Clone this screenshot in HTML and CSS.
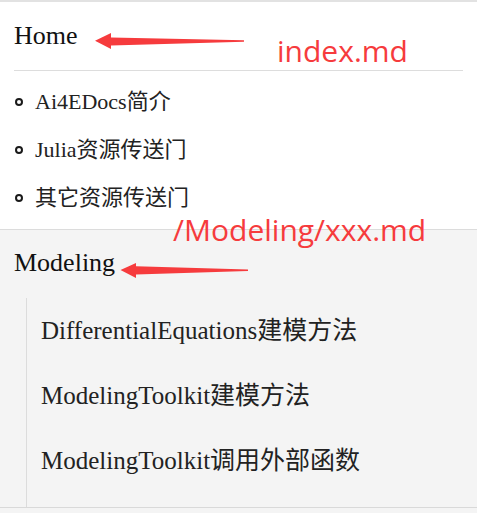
FILE: index.html
```html
<!DOCTYPE html>
<html lang="zh">
<head>
<meta charset="utf-8">
<title>Docs navigation</title>
<link rel="stylesheet" href="styles.css">
</head>
<body>
<div class="page">
  <section class="group group-home">
    <h2 class="group-title">Home</h2>
    <ul class="bullet-list">
      <li class="bullet-item">Ai4EDocs简介</li>
      <li class="bullet-item">Julia资源传送门</li>
      <li class="bullet-item">其它资源传送门</li>
    </ul>
  </section>
  <section class="group group-modeling">
    <h2 class="group-title">Modeling</h2>
    <ul class="tree-list">
      <li class="tree-item">DifferentialEquations建模方法</li>
      <li class="tree-item">ModelingToolkit建模方法</li>
      <li class="tree-item">ModelingToolkit调用外部函数</li>
    </ul>
  </section>

  <svg class="arrows" width="477" height="513" viewBox="0 0 477 513" aria-hidden="true">
    <polygon class="arrow" points="95,40.8 111,33 111,37.6 244,40.3 244,41.7 111,45.6 111,49"/>
    <polygon class="arrow" points="120.5,270 136,263 136,266.2 248,269.5 248,270.9 136,274.4 136,278"/>
  </svg>
  <div class="note note-index">index.md</div>
  <div class="note note-modeling">/Modeling/xxx.md</div>
</div>
</body>
</html>
```

FILE: styles.css
```css
html, body {
  margin: 0;
  padding: 0;
}

body {
  background: #f4f4f4;
  font-family: "Liberation Serif", "Noto Sans CJK SC", serif;
  color: #222;
}

.page {
  position: relative;
  width: 477px;
  height: 513px;
  overflow: hidden;
}

.group {
  padding: 0 14px;
}

.group-home {
  background: #fff;
  border-top: 2px solid #e2e2e2;
  padding-top: 0;
  padding-bottom: 7px;
}

.group-modeling {
  background: #f4f4f4;
  border-top: 1px solid #dcdcdc;
  border-bottom: 1px solid #d9d9d9;
}

.group-title {
  margin: 0;
  font-size: 26px;
  font-weight: normal;
  line-height: 40px;
  color: #111;
}

.group-home .group-title {
  padding: 14px 0 14px;
  border-bottom: 1px solid #dddddd;
}

.group-modeling .group-title {
  padding: 13px 0 0;
}

.bullet-list {
  list-style: none;
  margin: 7px 0 0;
  padding: 0;
}

.bullet-item {
  font-size: 22px;
  line-height: 48px;
  white-space: nowrap;
}

.bullet-item::before {
  content: "";
  display: inline-block;
  box-sizing: border-box;
  width: 8px;
  height: 8px;
  margin: 0 12px 0 1px;
  border: 2px solid #1a1a1a;
  border-radius: 50%;
  vertical-align: 3px;
}

.tree-list {
  list-style: none;
  margin: 15px 0 0 12px;
  padding: 0 0 14px 14px;
  border-left: 1px solid #dcdcdc;
}

.tree-item {
  font-size: 25px;
  line-height: 65px;
  white-space: nowrap;
}

.arrows {
  position: absolute;
  left: 0;
  top: 0;
  pointer-events: none;
}

.arrow {
  fill: #f63b3d;
}

.note {
  position: absolute;
  font-family: "Open Sans", "Noto Sans", sans-serif;
  font-size: 30px;
  line-height: 30px;
  color: #f63b3d;
  white-space: nowrap;
}

.note-index {
  left: 277px;
  top: 36px;
}

.note-modeling {
  left: 173px;
  top: 215px;
}
```
